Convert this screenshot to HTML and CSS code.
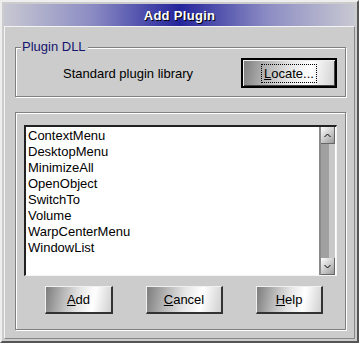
FILE: index.html
```html
<!DOCTYPE html>
<html lang="en">
<head>
  <meta charset="UTF-8">
  <title>Add Plugin</title>
  <link rel="stylesheet" href="styles.css">
</head>
<body>
  <div class="window">
    <div class="titlebar"><span>Add Plugin</span></div>

    <div class="client">
      <div class="group dll">
        <span class="legend">Plugin DLL</span>
        <div class="dll-row">
          <span class="dll-name">Standard plugin library</span>
          <button class="btn default"><span class="focus"><u>L</u>ocate...</span></button>
        </div>
      </div>

      <div class="group plugins">
        <div class="listbox">
          <ul class="items">
            <li>ContextMenu</li>
            <li>DesktopMenu</li>
            <li>MinimizeAll</li>
            <li>OpenObject</li>
            <li>SwitchTo</li>
            <li>Volume</li>
            <li>WarpCenterMenu</li>
            <li>WindowList</li>
          </ul>
          <div class="scrollbar">
            <div class="arrow">
              <svg width="7" height="5" viewBox="0 0 7 5"><path d="M0.5 4 L3.5 1 L6.5 4" fill="none" stroke="#000" stroke-width="1"/></svg>
            </div>
            <div class="track"></div>
            <div class="arrow">
              <svg width="7" height="5" viewBox="0 0 7 5"><path d="M0.5 1 L3.5 4 L6.5 1" fill="none" stroke="#000" stroke-width="1"/></svg>
            </div>
          </div>
        </div>

        <div class="buttons">
          <button class="btn add"><u>A</u>dd</button>
          <button class="btn cancel"><u>C</u>ancel</button>
          <button class="btn help"><u>H</u>elp</button>
        </div>
      </div>
    </div>
  </div>
</body>
</html>
```

FILE: styles.css
```css
body {
  margin: 0;
  background: #cccccc;
  font-family: 'Liberation Sans', Arial, sans-serif;
  font-size: 13px;
  color: #000;
}

.window {
  box-sizing: border-box;
  width: 359px;
  height: 343px;
  background: #cccccc;
  border-top: 2px solid #eeeeee;
  border-left: 2px solid #eeeeee;
  border-right: 2px solid #555555;
  border-bottom: 2px solid #555555;
  padding: 2px;
  display: flex;
  flex-direction: column;
}

.titlebar {
  height: 22px;
  background: linear-gradient(90deg, #c8c8d2 0%, #8c8cc4 25%, #24249c 50%, #8c8cc4 75%, #c8c8d2 100%);
  display: flex;
  align-items: center;
  justify-content: center;
  flex-shrink: 0;
}

.titlebar span {
  color: #fff;
  font-weight: bold;
  font-size: 13px;
  text-shadow: 1px 1px 0 #000;
  letter-spacing: 0.3px;
}

.client {
  flex: 1;
  border-left: 1px solid #f4f4f4;
  border-top: 1px solid #f4f4f4;
  border-right: 1px solid #888;
  border-bottom: 1px solid #888;
  padding: 20px 8px 8px 10px;
  display: flex;
  flex-direction: column;
}

/* etched group frame */
.group {
  position: relative;
  border: 1px solid #808080;
  box-shadow: inset 1px 1px 0 #fff, 1px 1px 0 #fff;
}

.legend {
  position: absolute;
  top: -8px;
  left: 5px;
  padding: 0 2px 0 1px;
  background: #cccccc;
  color: #14146e;
  font-size: 13px;
  line-height: 14px;
}

.dll {
  height: 50px;
  box-sizing: border-box;
}

.dll-row {
  display: flex;
  align-items: center;
  padding: 10px 8px 0 47px;
}

.dll-name {
  flex: 1;
}

.btn {
  box-sizing: border-box;
  height: 28px;
  font-family: 'Liberation Sans', Arial, sans-serif;
  font-size: 13px;
  color: #000;
  padding: 0;
  border-top: 1px solid #f0f0f0;
  border-left: 1px solid #f0f0f0;
  border-right: 2px solid #333;
  border-bottom: 2px solid #333;
  background: linear-gradient(100deg, #7c7c7c 0%, #b4b4b4 25%, #e6e6e6 50%, #ffffff 72%, #d0d0d0 100%);
}

.btn u {
  text-decoration-thickness: 1px;
}

.default {
  width: 96px;
  height: 30px;
  border: 2px solid #000;
  box-shadow: inset 1px 1px 0 #eee, inset -1px -1px 0 #444;
}

.focus {
  display: inline-block;
  padding: 1px 2px;
  border: 1px dotted #000;
}

.plugins {
  margin-top: 15px;
  flex: 1;
  padding: 12px 8px 9px 8px;
  display: flex;
  flex-direction: column;
}

.listbox {
  height: 151px;
  box-sizing: border-box;
  background: #fff;
  border-top: 2px solid #222;
  border-left: 2px solid #222;
  border-right: 1px solid #f4f4f4;
  border-bottom: 1px solid #f4f4f4;
  display: flex;
}

.items {
  flex: 1;
  list-style: none;
  margin: 0;
  padding: 1px 0 0 2px;
}

.items li {
  height: 16px;
  line-height: 16px;
}

.scrollbar {
  width: 14px;
  display: flex;
  flex-direction: column;
  background: #a8a8a8;
  border-left: 2px solid #8a8a8a;
  margin-right: 1px;
}

.arrow {
  height: 17px;
  box-sizing: border-box;
  background: linear-gradient(135deg, #ffffff, #c4c4c4 60%, #9a9a9a);
  border-right: 1px solid #666;
  border-bottom: 1px solid #666;
  display: flex;
  align-items: center;
  justify-content: center;
}

.track {
  flex: 1;
  background: linear-gradient(90deg, #a0a0a0 0%, #a0a0a0 60%, #c8c8c8 60%);
}

.buttons {
  display: flex;
  gap: 33px;
  padding-left: 21px;
  margin-top: 10px;
}

.add {
  width: 68px;
}

.cancel {
  width: 77px;
}

.help {
  width: 67px;
}
```
